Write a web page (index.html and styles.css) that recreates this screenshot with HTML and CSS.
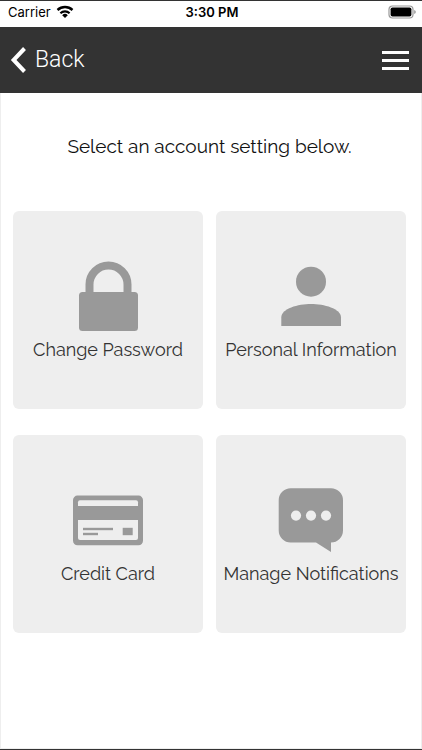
FILE: index.html
```html
<!DOCTYPE html>
<html lang="en">
<head>
  <title>Account Settings</title>
  <meta charset="UTF-8">
  <meta name="viewport" content="width=device-width, initial-scale=1.0">
  <link rel="stylesheet" href="styles.css">
</head>
<body>

  <div class="status-bar">
    <div class="carrier">
      <span>Carrier</span>
      <svg class="wifi" viewBox="0 0 18 14" aria-hidden="true">
        <path d="M1.5 5 A11 11 0 0 1 16.5 5" fill="none" stroke="#000" stroke-width="2.4"/>
        <path d="M4.4 8.2 A6.8 6.8 0 0 1 13.6 8.2" fill="none" stroke="#000" stroke-width="2.2"/>
        <path d="M9 13 L6.2 10.2 A4 4 0 0 1 11.8 10.2 Z"/>
      </svg>
    </div>
    <span class="time">3:30 PM</span>
    <svg class="battery" viewBox="0 0 28 14" aria-hidden="true">
      <rect x="1" y="1" width="24" height="12" rx="3.5" fill="none" stroke="#999" stroke-width="1.2"/>
      <rect x="2.6" y="2.4" width="20.8" height="9.2" rx="1.8"/>
      <path d="M26.2 5 Q27.8 5.6 27.8 7 Q27.8 8.4 26.2 9 Z" fill="#999"/>
    </svg>
  </div>

  <header class="navbar">
    <a href="#" class="back">
      <svg viewBox="0 0 16 26" aria-hidden="true">
        <path d="M14.5 1.5 L3.6 13 L14.5 24.5" fill="none" stroke="#fff" stroke-width="4"/>
      </svg>
      Back
    </a>
    <button type="button" class="menu" aria-label="Menu">
      <span></span>
      <span></span>
      <span></span>
    </button>
  </header>

  <main class="content">
    <p class="intro">Select an account setting below.</p>

    <div class="settings">
      <a href="#" class="card">
        <svg viewBox="0 0 80 80" aria-hidden="true">
          <path d="M21.5 36 V26.5 a19 19 0 0 1 38 0 V36" fill="none" stroke="#999" stroke-width="8"/>
          <rect x="11" y="34" width="59" height="39" rx="3.5"/>
        </svg>
        <span>Change Password</span>
      </a>

      <a href="#" class="card">
        <svg viewBox="0 0 80 80" aria-hidden="true">
          <circle cx="40" cy="23.7" r="15"/>
          <path d="M10.3 68 V59.5 C10.3 50.5 27 46 40 46 S70 50.5 70 59.5 V68 Z"/>
        </svg>
        <span>Personal Information</span>
      </a>

      <a href="#" class="card">
        <svg viewBox="0 0 80 80" aria-hidden="true">
          <rect x="5" y="13.6" width="70" height="49.7" rx="4.5"/>
          <path class="hole" d="M10 24 V20.3 a2 2 0 0 1 2 -2 H68 a2 2 0 0 1 2 2 V24 Z"/>
          <path class="hole" d="M10 38 H70 V56 a2 2 0 0 1 -2 2 H12 a2 2 0 0 1 -2 -2 Z"/>
          <rect x="15" y="45.8" width="30" height="2.4"/>
          <rect x="15" y="50.8" width="15" height="2.4"/>
          <rect x="54.7" y="45.8" width="10" height="7.4"/>
        </svg>
        <span>Credit Card</span>
      </a>

      <a href="#" class="card">
        <svg viewBox="0 0 80 80" aria-hidden="true">
          <path d="M19.7 6.2 H60 a12 12 0 0 1 12 12 V48.5 a12 12 0 0 1 -12 12 V70 L45 60.5 H19.7 a12 12 0 0 1 -12 -12 V18.2 a12 12 0 0 1 12 -12 Z"/>
          <circle class="hole" cx="25" cy="33.6" r="5.1"/>
          <circle class="hole" cx="40" cy="33.6" r="5.1"/>
          <circle class="hole" cx="55" cy="33.6" r="5.1"/>
        </svg>
        <span>Manage Notifications</span>
      </a>
    </div>
  </main>

</body>
</html>
```
FILE: styles.css
```css
/* Reset styles */
* {
  margin: 0;
  padding: 0;
  box-sizing: border-box;
}

/* Base styles */
body {
  display: flex;
  flex-direction: column;
  min-height: 100vh;
  font-family: Raleway, Lato, sans-serif;
  font-size: 18px;
  line-height: 24px;
  background-color: #fff;
  color: #333;
  border-top: 1px solid #333;
  border-bottom: 1px solid #333;
}

a {
  color: inherit;
  text-decoration: none;
}

/* Status bar */
.status-bar {
  display: grid;
  grid-template-columns: 1fr auto 1fr;
  align-items: center;
  height: 26px;
  padding: 0 6px 4px 8px;
  font-family: Inter, sans-serif;
  font-size: 13px;
  line-height: 16px;
  color: #000;
}

.carrier {
  display: flex;
  align-items: center;
  gap: 5px;
}

.wifi {
  width: 18px;
  height: 14px;
}

.time {
  font-weight: 600;
}

.battery {
  width: 28px;
  height: 14px;
  justify-self: end;
}

/* Navbar */
.navbar {
  display: flex;
  justify-content: space-between;
  align-items: center;
  height: 66px;
  padding: 0 13px 0 10px;
  background-color: #333;
  color: #fff;
}

.back {
  display: flex;
  align-items: center;
  gap: 9px;
  font-family: Roboto, sans-serif;
  font-size: 23px;
  font-weight: 300;
}

.back svg {
  width: 16px;
  height: 26px;
}

.menu {
  display: flex;
  flex-direction: column;
  gap: 5px;
  width: 27px;
  background: none;
  border: none;
  cursor: pointer;
}

.menu span {
  height: 3px;
  background-color: #fff;
}

/* Content */
.content {
  flex: 1;
  padding: 41px 15px 24px 12px;
  border: 1px solid #eee;
  border-top: none;
}

.intro {
  margin-bottom: 53px;
  font-size: 19px;
  text-align: center;
  color: #111;
}

.settings {
  display: grid;
  grid-template-columns: 1fr 1fr;
  gap: 26px 13px;
}

.card {
  display: flex;
  flex-direction: column;
  align-items: center;
  justify-content: center;
  padding: 47px 0;
  border-radius: 6px;
  background-color: #eee;
  white-space: nowrap;
}

.card svg {
  width: 80px;
  height: 80px;
  fill: #999;
}

.card .hole {
  fill: #eee;
}
```
